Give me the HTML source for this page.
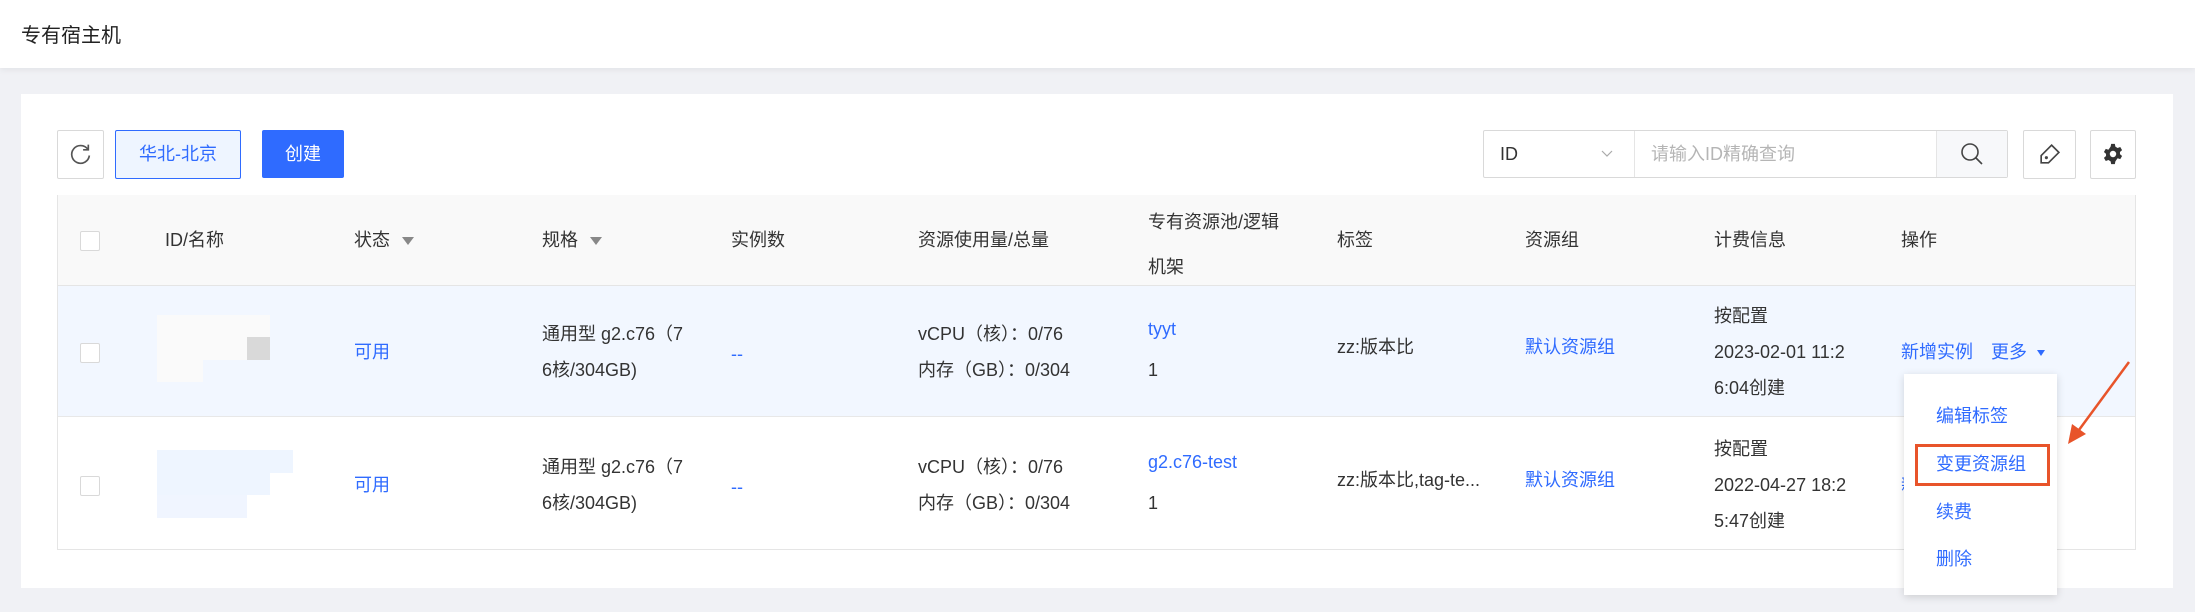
<!DOCTYPE html>
<html><head><meta charset="utf-8"><style>
*{margin:0;padding:0;box-sizing:border-box}
body{width:2195px;height:612px;background:#f0f1f5;font-family:"Liberation Sans","Noto Sans CJK SC",sans-serif;color:#333;font-size:18px;position:relative;overflow:hidden}
.a{position:absolute}
.hdr{left:0;top:0;width:2195px;height:68px;background:#fff;box-shadow:0 2px 6px rgba(0,0,0,.06)}
.card{left:21px;top:94px;width:2152px;height:494px;background:#fff}
.btn{border:1px solid #d9d9d9;border-radius:2px;background:#fff}
.blue{color:#2f6bff}
.tbl{left:57px;top:195px;width:2079px;height:355px;border:1px solid #e5e5e5}
.th{top:195px;height:91px;left:58px;width:2077px;background:#f9f9f9;border-bottom:1px solid #e5e5e5}
.cb{width:20px;height:20px;border:1px solid #d9d9d9;border-radius:2px;background:#fff}
.t{white-space:nowrap;line-height:36px}
.tri{display:inline-block;width:0;height:0;border-left:6px solid transparent;border-right:6px solid transparent;border-top:8px solid #888;margin-left:12px;vertical-align:middle}
</style></head><body>
<div class="a hdr"></div>
<div class="a" style="left:21px;top:19px;font-size:20px;color:#222">专有宿主机</div>
<div class="a card"></div>

<div class="a btn" style="left:57px;top:130px;width:47px;height:49px"></div>
<svg class="a" style="left:68px;top:142px" width="25" height="25" viewBox="0 0 24 24"><path d="M19 7A8.5 8.5 0 1 0 20.5 13" fill="none" stroke="#555" stroke-width="1.6"/><path d="M19.5 2.5V7.5H14.5" fill="none" stroke="#555" stroke-width="1.6"/></svg>
<div class="a" style="left:115px;top:130px;width:126px;height:49px;border:1px solid #2f6bff;border-radius:2px;background:#eef5ff;color:#2f6bff;text-align:center;line-height:47px">华北-北京</div>
<div class="a" style="left:262px;top:130px;width:82px;height:48px;background:#2f6bff;border-radius:2px;color:#fff;text-align:center;line-height:48px">创建</div>

<div class="a btn" style="left:1483px;top:130px;width:525px;height:48px"></div>
<div class="a" style="left:1634px;top:131px;width:1px;height:46px;background:#e5e5e5"></div>
<div class="a" style="left:1936px;top:131px;width:71px;height:46px;background:#f7f8fa;border-left:1px solid #e5e5e5"></div>
<div class="a" style="left:1500px;top:141px;line-height:26px">ID</div>
<svg class="a" style="left:1601px;top:150px" width="12" height="8"><path d="M1 1L6 6L11 1" fill="none" stroke="#aaa" stroke-width="1.2"/></svg>
<div class="a" style="left:1651px;top:141px;line-height:26px;color:#b5b5b5">请输入ID精确查询</div>
<svg class="a" style="left:1959px;top:141px" width="26" height="26" viewBox="0 0 26 26"><circle cx="11" cy="11" r="8" fill="none" stroke="#444" stroke-width="1.6"/><path d="M17 17L23 23" stroke="#444" stroke-width="1.6"/></svg>
<div class="a btn" style="left:2023px;top:130px;width:53px;height:49px"></div>
<svg class="a" style="left:2037px;top:142px" width="25" height="25" viewBox="0 0 24 24"><path d="M14 3L21 10L11 20L4 20L4 13Z" fill="none" stroke="#444" stroke-width="1.6"/><circle cx="9" cy="15" r="1.5" fill="#444"/></svg>
<div class="a btn" style="left:2090px;top:130px;width:46px;height:49px"></div>
<svg class="a" style="left:2102px;top:143px" width="22" height="22" viewBox="0 0 24 24"><path fill="#333" d="M10 1h4l.6 3 2.4 1.4 2.9-1 2 3.4-2.3 2v2.4l2.3 2-2 3.4-2.9-1L14.6 20 14 23h-4l-.6-3L7 18.6l-2.9 1-2-3.4 2.3-2v-2.4l-2.3-2 2-3.4 2.9 1L9.4 4z"/><circle cx="12" cy="12" r="3.5" fill="#fff"/></svg>

<div class="a tbl"></div>
<div class="a th"></div>
<div class="a" style="left:58px;top:286px;width:2077px;height:131px;background:#f2f7ff;border-bottom:1px solid #e8e8e8"></div>

<div class="a cb" style="left:80px;top:231px"></div>
<div class="a t" style="left:165px;top:222px">ID/名称</div>
<div class="a t" style="left:354px;top:222px">状态<span class="tri"></span></div>
<div class="a t" style="left:542px;top:222px">规格<span class="tri"></span></div>
<div class="a t" style="left:731px;top:222px">实例数</div>
<div class="a t" style="left:918px;top:222px">资源使用量/总量</div>
<div class="a t" style="left:1148px;top:200px;line-height:45px">专有资源池/逻辑<br>机架</div>
<div class="a t" style="left:1337px;top:222px">标签</div>
<div class="a t" style="left:1525px;top:222px">资源组</div>
<div class="a t" style="left:1714px;top:222px">计费信息</div>
<div class="a t" style="left:1901px;top:222px">操作</div>

<div class="a cb" style="left:80px;top:343px"></div>
<div class="a" style="left:157px;top:315px;width:113px;height:22px;background:#fafafa"></div>
<div class="a" style="left:157px;top:337px;width:90px;height:23px;background:#fafafa"></div>
<div class="a" style="left:247px;top:337px;width:23px;height:23px;background:#d9d9d9"></div>
<div class="a" style="left:157px;top:360px;width:46px;height:22px;background:#fafafa"></div>
<div class="a t blue" style="left:354px;top:334px">可用</div>
<div class="a t" style="left:542px;top:316px">通用型 g2.c76（7<br>6核/304GB)</div>
<div class="a t blue" style="left:731px;top:336px">--</div>
<div class="a t" style="left:918px;top:316px">vCPU（核）：0/76<br>内存（GB）：0/304</div>
<div class="a t blue" style="left:1148px;top:311px">tyyt</div>
<div class="a t" style="left:1148px;top:352px">1</div>
<div class="a t" style="left:1337px;top:329px">zz:版本比</div>
<div class="a t blue" style="left:1525px;top:329px">默认资源组</div>
<div class="a t" style="left:1714px;top:298px">按配置</div>
<div class="a t" style="left:1714px;top:334px">2023-02-01 11:2</div>
<div class="a t" style="left:1714px;top:370px">6:04创建</div>
<div class="a t blue" style="left:1901px;top:334px">新增实例　更多<span class="tri" style="border-top-color:#2f6bff;border-width:6px 4px 0;margin-left:10px"></span></div>

<div class="a cb" style="left:80px;top:476px"></div>
<div class="a" style="left:157px;top:450px;width:136px;height:23px;background:#eef5ff"></div>
<div class="a" style="left:157px;top:473px;width:113px;height:22px;background:#eef5ff"></div>
<div class="a" style="left:157px;top:495px;width:90px;height:23px;background:#f0f5ff"></div>
<div class="a t blue" style="left:354px;top:467px">可用</div>
<div class="a t" style="left:542px;top:449px">通用型 g2.c76（7<br>6核/304GB)</div>
<div class="a t blue" style="left:731px;top:469px">--</div>
<div class="a t" style="left:918px;top:449px">vCPU（核）：0/76<br>内存（GB）：0/304</div>
<div class="a t blue" style="left:1148px;top:444px">g2.c76-test</div>
<div class="a t" style="left:1148px;top:485px">1</div>
<div class="a t" style="left:1337px;top:462px">zz:版本比,tag-te...</div>
<div class="a t blue" style="left:1525px;top:462px">默认资源组</div>
<div class="a t" style="left:1714px;top:431px">按配置</div>
<div class="a t" style="left:1714px;top:467px">2022-04-27 18:2</div>
<div class="a t" style="left:1714px;top:503px">5:47创建</div>
<div class="a t blue" style="left:1901px;top:467px">新增实例</div>

<div class="a" style="left:1904px;top:374px;width:153px;height:221px;background:#fff;box-shadow:0 2px 8px rgba(0,0,0,.15)"></div>
<div class="a t blue" style="left:1936px;top:398px">编辑标签</div>
<div class="a" style="left:1915px;top:444px;width:135px;height:42px;border:3px solid #e8542a"></div>
<div class="a t blue" style="left:1936px;top:446px">变更资源组</div>
<div class="a t blue" style="left:1936px;top:494px">续费</div>
<div class="a t blue" style="left:1936px;top:541px">删除</div>
<svg class="a" style="left:2060px;top:358px" width="80" height="92"><path d="M69 4L16 76" stroke="#e8542a" stroke-width="2.5"/><path d="M8 86L12 66L26 76Z" fill="#e8542a"/></svg>
</body></html>
